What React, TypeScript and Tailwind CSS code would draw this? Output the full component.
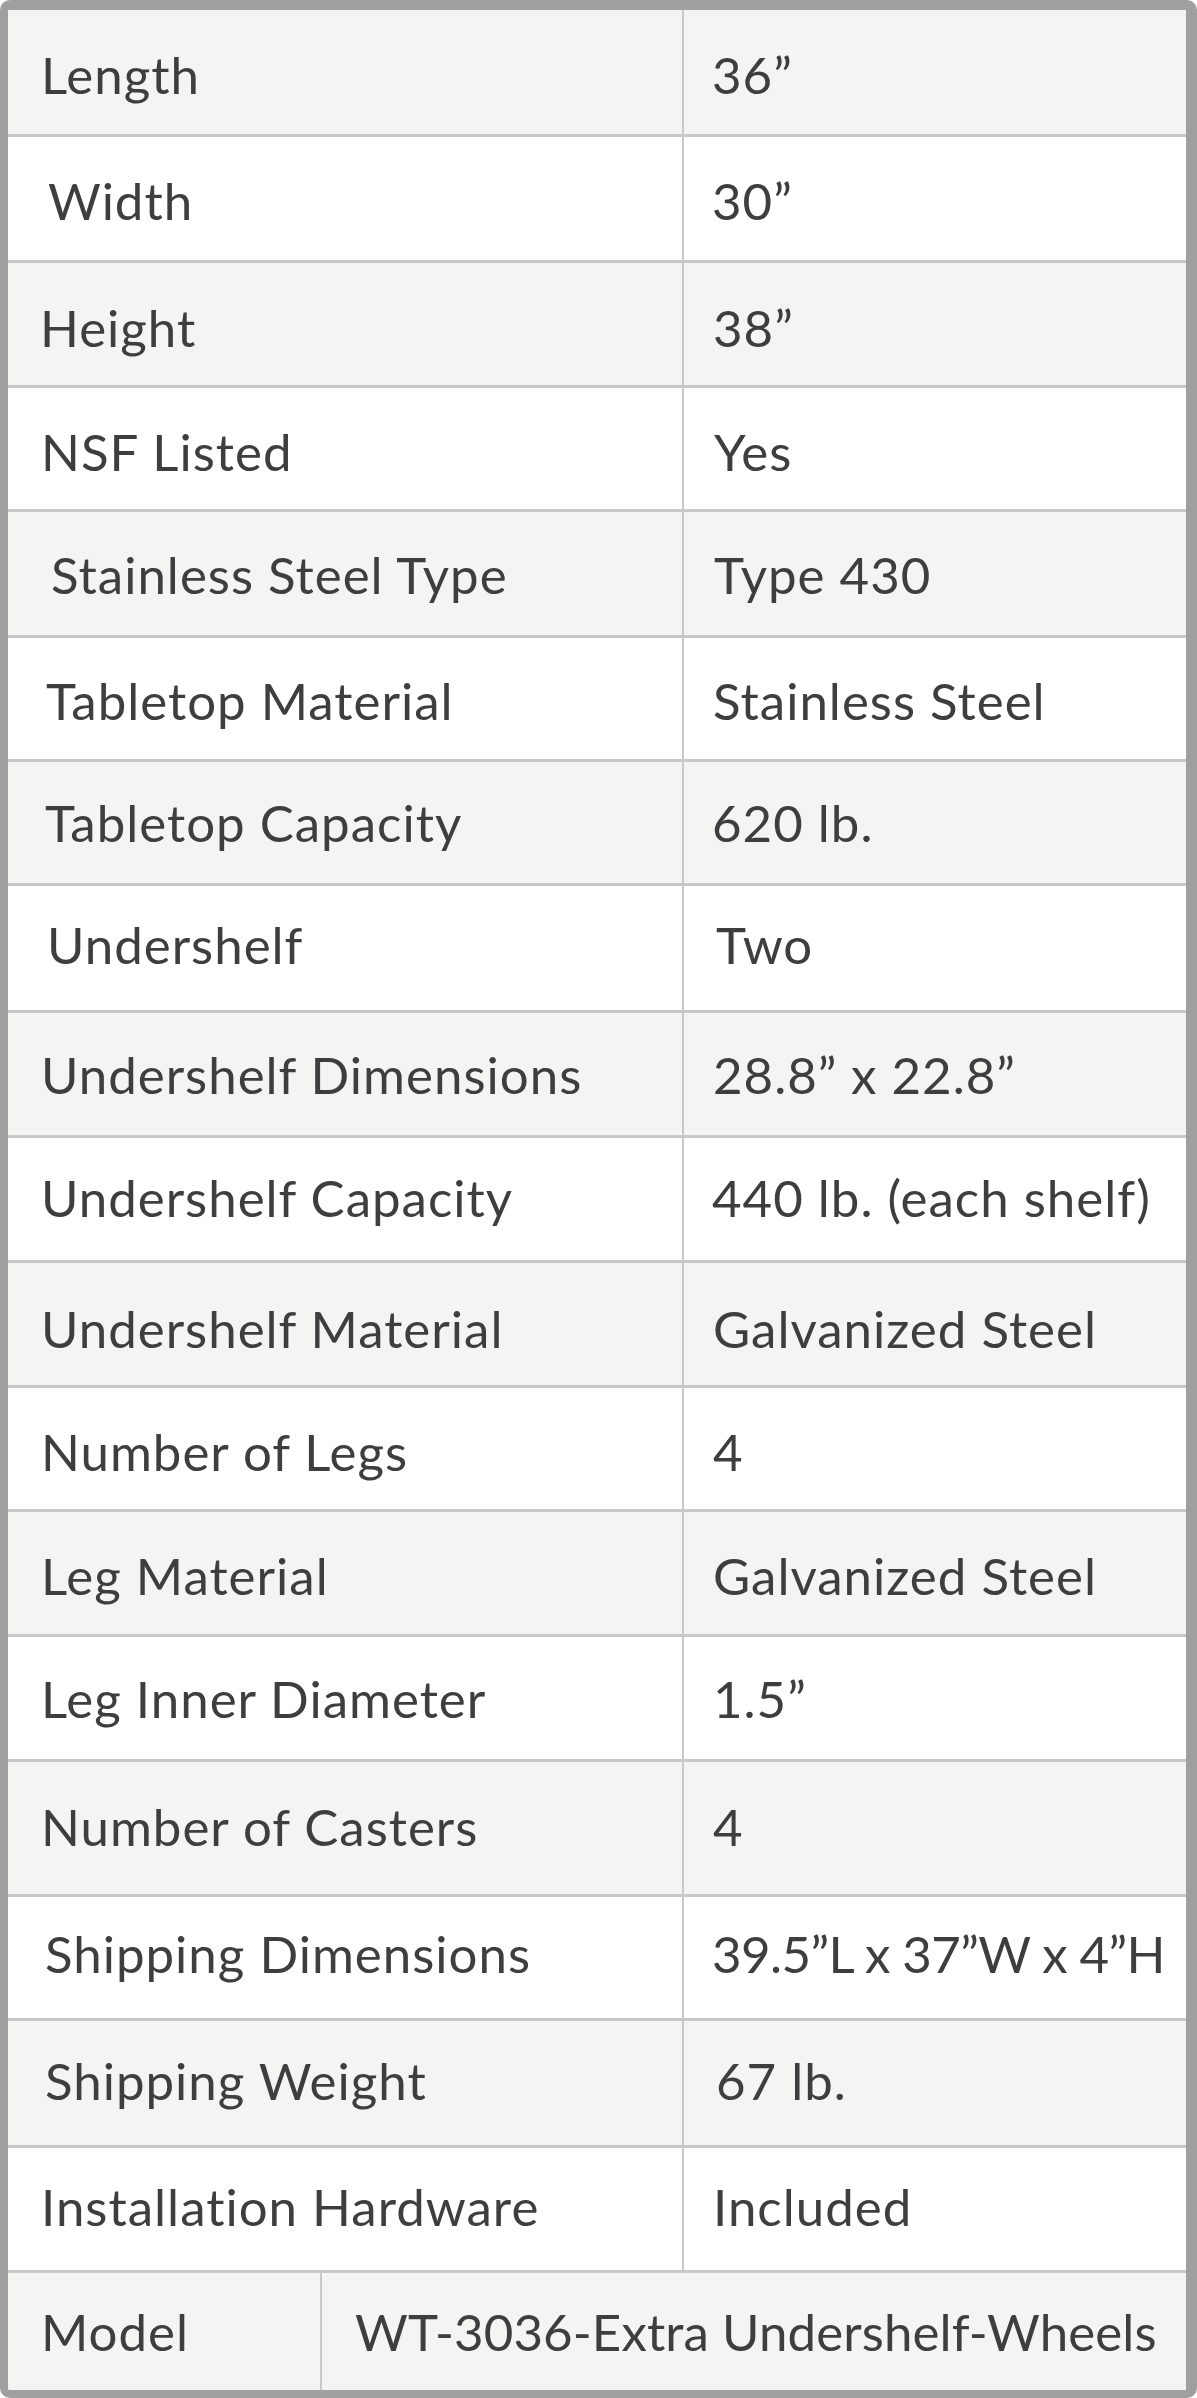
import React from "react";

type Row = {
  label: string;
  value: string;
  h: string;
  bg: string;
  shift: string;
  lp: string;
  vp: string;
  vt?: string;
};

const rows: Row[] = [
  { label: "Length", value: "36\u201D", h: "h-[124px]", bg: "bg-[#f4f4f2]", shift: "pt-[6px]", lp: "pl-[33px]", vp: "pl-[28px]" },
  { label: "Width", value: "30\u201D", h: "h-[123px]", bg: "bg-white", shift: "pt-[5px]", lp: "pl-[40px]", vp: "pl-[28px]" },
  { label: "Height", value: "38\u201D", h: "h-[122px]", bg: "bg-[#f4f4f2]", shift: "pt-[8px]", lp: "pl-[32px]", vp: "pl-[29px]" },
  { label: "NSF Listed", value: "Yes", h: "h-[121px]", bg: "bg-white", shift: "pt-[7px]", lp: "pl-[33px]", vp: "pl-[30px]" },
  { label: "Stainless Steel Type", value: "Type 430", h: "h-[123px]", bg: "bg-[#f4f4f2]", shift: "pt-[3px]", lp: "pl-[43px]", vp: "pl-[30px]" },
  { label: "Tabletop Material", value: "Stainless Steel", h: "h-[121px]", bg: "bg-white", shift: "pt-[5px]", lp: "pl-[38px]", vp: "pl-[29px]" },
  { label: "Tabletop Capacity", value: "620 lb.", h: "h-[121px]", bg: "bg-[#f4f4f2]", shift: "pt-[1px]", lp: "pl-[37px]", vp: "pl-[28px]" },
  { label: "Undershelf", value: "Two", h: "h-[124px]", bg: "bg-white", shift: "pb-[7px]", lp: "pl-[39px]", vp: "pl-[32px]" },
  { label: "Undershelf Dimensions", value: "28.8\u201D x 22.8\u201D", h: "h-[122px]", bg: "bg-[#f4f4f2]", shift: "pt-[2px]", lp: "pl-[33px]", vp: "pl-[29px]" },
  { label: "Undershelf Capacity", value: "440 lb. (each shelf)", h: "h-[122px]", bg: "bg-white", shift: "pb-[3px]", lp: "pl-[33px]", vp: "pl-[28px]" },
  { label: "Undershelf Material", value: "Galvanized Steel", h: "h-[122px]", bg: "bg-[#f4f4f2]", shift: "pt-[10px]", lp: "pl-[33px]", vp: "pl-[29px]" },
  { label: "Number of Legs", value: "4", h: "h-[121px]", bg: "bg-white", shift: "pt-[7px]", lp: "pl-[33px]", vp: "pl-[29px]" },
  { label: "Leg Material", value: "Galvanized Steel", h: "h-[122px]", bg: "bg-[#f4f4f2]", shift: "pt-[6px]", lp: "pl-[33px]", vp: "pl-[29px]" },
  { label: "Leg Inner Diameter", value: "1.5\u201D", h: "h-[122px]", bg: "bg-white", shift: "pt-[1px]", lp: "pl-[33px]", vp: "pl-[29px]" },
  { label: "Number of Casters", value: "4", h: "h-[132px]", bg: "bg-[#f4f4f2]", shift: "pb-[3px]", lp: "pl-[33px]", vp: "pl-[29px]" },
  { label: "Shipping Dimensions", value: "39.5\u201DL x 37\u201DW x 4\u201DH", h: "h-[121px]", bg: "bg-white", shift: "pb-[8px]", lp: "pl-[37px]", vp: "pl-[28px]", vt: "tracking-[-0.6px]" },
  { label: "Shipping Weight", value: "67 lb.", h: "h-[124px]", bg: "bg-[#f4f4f2]", shift: "pb-[5px]", lp: "pl-[37px]", vp: "pl-[32px]" },
  { label: "Installation Hardware", value: "Included", h: "h-[122px]", bg: "bg-white", shift: "pb-[4px]", lp: "pl-[33px]", vp: "pl-[29px]" },
];

export default function App() {
  return (
    <div
      className="w-[1197px] h-[2398px] bg-white text-[#3e3e3e] text-[51px] leading-[1.2]"
      style={{ fontFamily: "Lato, 'Open Sans', sans-serif" }}
    >
      <div className="h-[2398px] rounded-[10px] border-[#a09fa0] border-t-[10px] border-l-[8px] border-r-[11px] border-b-[8px] overflow-hidden flex flex-col">
        {rows.map((r) => (
          <div key={r.label} className={`flex ${r.h} ${r.bg} shrink-0 border-b-[3px] border-[#c8c8c8] box-content`}>
            <div className={`w-[676px] shrink-0 border-r-2 border-[#c8c8c8] flex items-center ${r.lp} ${r.shift}`}>
              <span className="whitespace-nowrap tracking-[1px]">{r.label}</span>
            </div>
            <div className={`flex-1 flex items-center ${r.vp} ${r.shift}`}>
              <span className={`whitespace-nowrap ${r.vt ?? "tracking-[1px]"}`}>{r.value}</span>
            </div>
          </div>
        ))}
        <div className="flex flex-1 bg-[#f4f4f2]">
          <div className="w-[314px] shrink-0 border-r-2 border-[#c8c8c8] flex items-center pl-[33px]">
            <span className="whitespace-nowrap tracking-[1px]">Model</span>
          </div>
          <div className="flex-1 flex items-center pl-[33px]">
            <span className="whitespace-nowrap tracking-[0.1px]">WT-3036-Extra Undershelf-Wheels</span>
          </div>
        </div>
      </div>
    </div>
  );
}
